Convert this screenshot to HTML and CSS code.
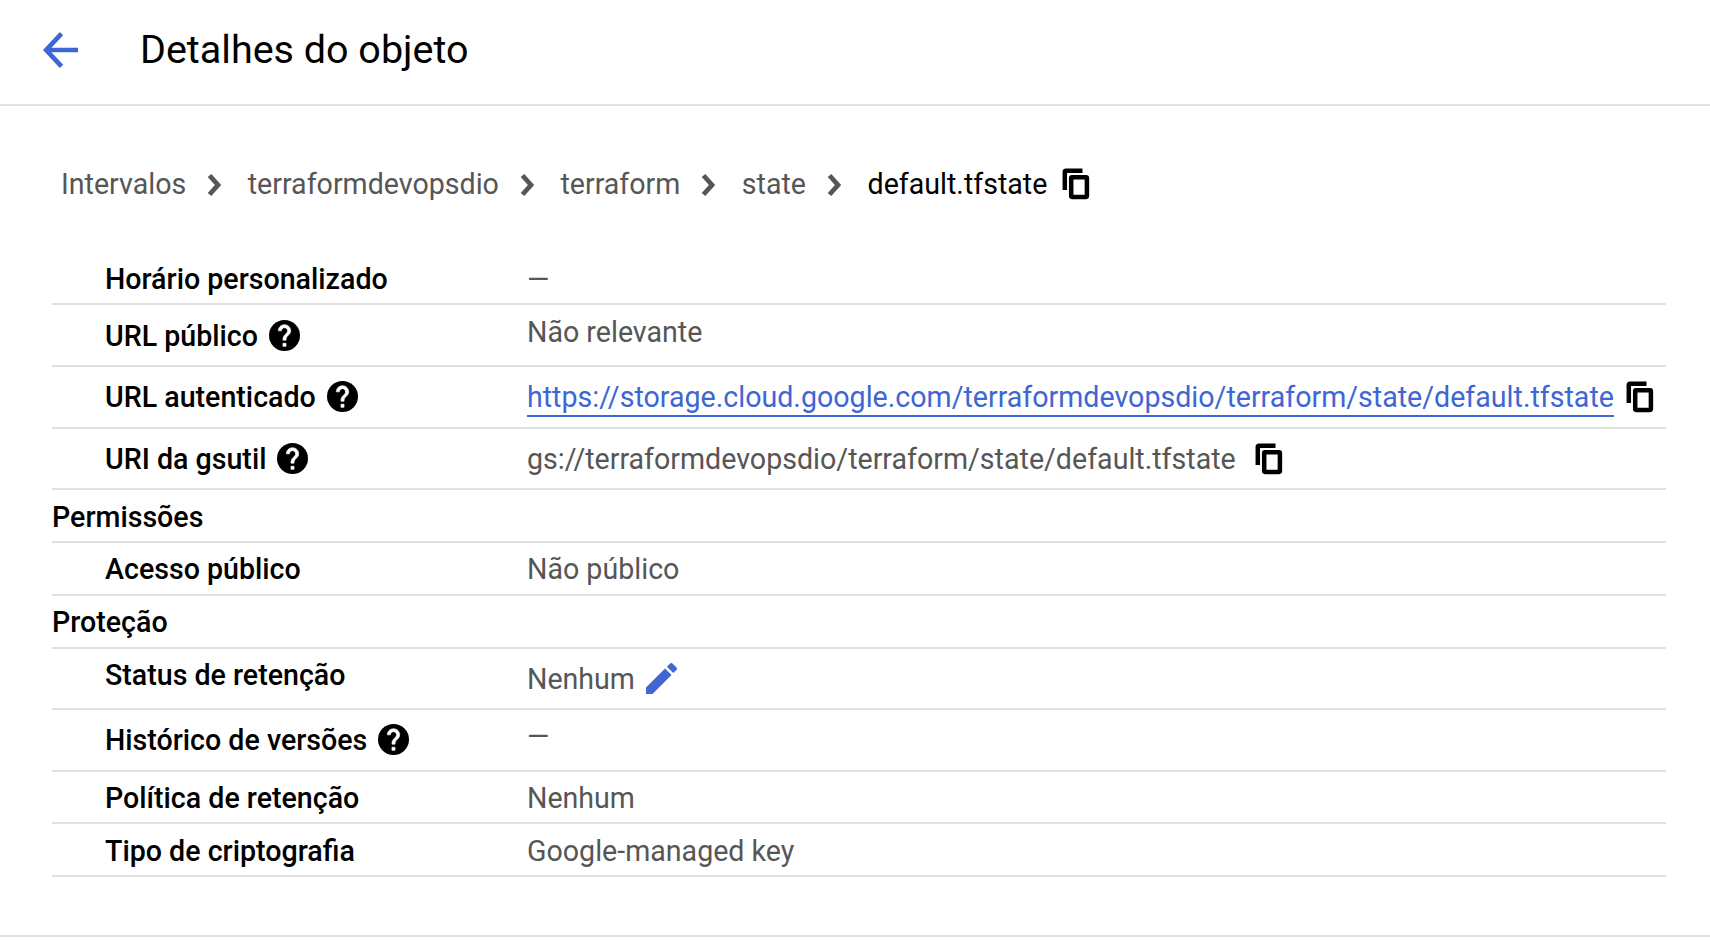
FILE: index.html
```html
<!DOCTYPE html>
<html lang="pt">
<head>
<meta charset="utf-8">
<title>Detalhes do objeto</title>
<link rel="stylesheet" href="styles.css">
</head>
<body>
<svg class="sprite" aria-hidden="true">
  <symbol id="copy" viewBox="0 0 28 32"><path d="M2.800 22V4Q2.800 2.700 4 2.700H20.500" fill="none" stroke="currentColor" stroke-width="4.500"/><rect x="9.200" y="9.200" width="15.700" height="19.700" rx="0.800" fill="none" stroke="currentColor" stroke-width="4.500"/></symbol>
  <symbol id="help" viewBox="2 2 20 20"><circle cx="12" cy="12" r="10" fill="currentColor"/><path fill="#fff" stroke="#fff" stroke-width=".4" d="M13 19h-2v-2h2v2zm2.070-7.750l-.9.920C13.450 12.900 13 13.500 13 15h-2v-.5c0-1.100.45-2.100 1.170-2.830l1.240-1.260c.37-.36.59-.86.59-1.410 0-1.100-.9-2-2-2s-2 .9-2 2H8c0-2.210 1.790-4 4-4s4 1.790 4 4c0 .88-.36 1.680-.93 2.250z"/></symbol>
  <symbol id="chevron" viewBox="0 0 14 24"><path d="M2.500 2.500l8.500 9.500-8.500 9.500" fill="none" stroke="currentColor" stroke-width="4.800"/></symbol>
</svg>
<header class="header">
  <svg class="back" viewBox="0 0 36 36"><path d="M18.500 1.700L3.200 18l15.300 16.300M3 18h32" fill="none" stroke="currentColor" stroke-width="4.700"/></svg>
  <h1 class="title">Detalhes do objeto</h1>
</header>
<main class="content">
  <nav class="crumbs">
    <span>Intervalos</span><svg class="chevron"><use href="#chevron"/></svg>
    <span>terraformdevopsdio</span><svg class="chevron"><use href="#chevron"/></svg>
    <span>terraform</span><svg class="chevron"><use href="#chevron"/></svg>
    <span>state</span><svg class="chevron"><use href="#chevron"/></svg>
    <span class="current">default.tfstate</span><svg class="copy"><use href="#copy"/></svg>
  </nav>
  <div class="details">
    <div class="row"><div class="label">Horário personalizado</div><div class="value">—</div></div>
    <div class="row tall lower"><div class="label">URL público<svg class="help"><use href="#help"/></svg></div><div class="value high">Não relevante</div></div>
    <div class="row tall"><div class="label">URL autenticado<svg class="help"><use href="#help"/></svg></div><div class="value"><a class="link">https://storage.cloud.google.com/terraformdevopsdio/terraform/state/default.tfstate</a><svg class="copy near"><use href="#copy"/></svg></div></div>
    <div class="row tall short"><div class="label">URI da gsutil<svg class="help"><use href="#help"/></svg></div><div class="value">gs://terraformdevopsdio/terraform/state/default.tfstate<svg class="copy wide"><use href="#copy"/></svg></div></div>
    <div class="row"><div class="label group">Permissões</div></div>
    <div class="row upper"><div class="label">Acesso público</div><div class="value">Não público</div></div>
    <div class="row upper"><div class="label group">Proteção</div></div>
    <div class="row tall short"><div class="label high">Status de retenção</div><div class="value">Nenhum<svg class="pencil" viewBox="3 3 18 18"><path fill="currentColor" d="M3 17.250V21h3.750L17.810 9.940l-3.750-3.750L3 17.250zM20.710 7.040c.39-.39.39-1.020 0-1.410l-2.340-2.340c-.39-.39-1.020-.39-1.410 0l-1.830 1.830 3.750 3.750 1.830-1.830z"/></svg></div></div>
    <div class="row tall"><div class="label">Histórico de versões<svg class="help"><use href="#help"/></svg></div><div class="value high">—</div></div>
    <div class="row less"><div class="label">Política de retenção</div><div class="value">Nenhum</div></div>
    <div class="row"><div class="label">Tipo de criptografia</div><div class="value">Google-managed key</div></div>
  </div>
</main>
</body>
</html>
```
FILE: styles.css
```css
* { box-sizing: border-box; }
body {
  margin: 0;
  height: 940px;
  background: #fff;
  font: 28.6px/36px Roboto, sans-serif;
  color: #565656;
  overflow: hidden;
}
svg { display: block; flex: none; }
.sprite { display: none; }
.header {
  display: flex;
  align-items: center;
  height: 106px;
  padding: 0 0 4px 43px;
  border-bottom: 2px solid #e0e0e0;
}
.back { width: 36px; height: 36px; color: #3e66d4; }
.title {
  margin: 0 0 0 61px;
  font-size: 39.5px;
  line-height: 48px;
  font-weight: 400;
  color: #000;
}
.content {
  height: 831px;
  padding: 60px 44px 0 52px;
  border-bottom: 2px solid #e0e0e0;
}
.crumbs {
  display: flex;
  align-items: center;
  height: 36px;
  padding-left: 9px;
  margin-bottom: 50px;
}
.chevron { width: 14px; height: 24px; margin: 1px 26.5px 0 21px; }
.crumbs .current { color: #000; }
.copy { width: 28px; height: 32px; margin: -1px 0 0 15px; color: #000; }
.copy.near { margin-left: 12px; }
.copy.wide { margin-left: 19px; }
.row {
  display: flex;
  height: 53px;
  padding-top: 9px;
  border-bottom: 2px solid #e0e0e0;
}
.row.upper { padding-top: 8px; }
.row.less { height: 52px; padding-top: 8px; }
.row.tall { height: 62px; padding-top: 12px; }
.row.lower { padding-top: 13px; }
.row.short { height: 61px; }
.label {
  display: flex;
  align-items: center;
  width: 475px;
  height: 36px;
  padding-left: 53px;
  font-weight: 500;
  color: #000;
}
.label.group { padding-left: 0; }
.value { display: flex; align-items: center; height: 36px; }
.row .high { margin-top: -4px; }
.help { width: 31px; height: 31px; margin: -1px 0 0 11px; }
.link {
  height: 38px;
  margin-top: 2px;
  color: #3e66d4;
  border-bottom: 2px solid #3e66d4;
}
.pencil { width: 31px; height: 31px; margin: -1px 0 0 11px; color: #3e66d4; }
```
